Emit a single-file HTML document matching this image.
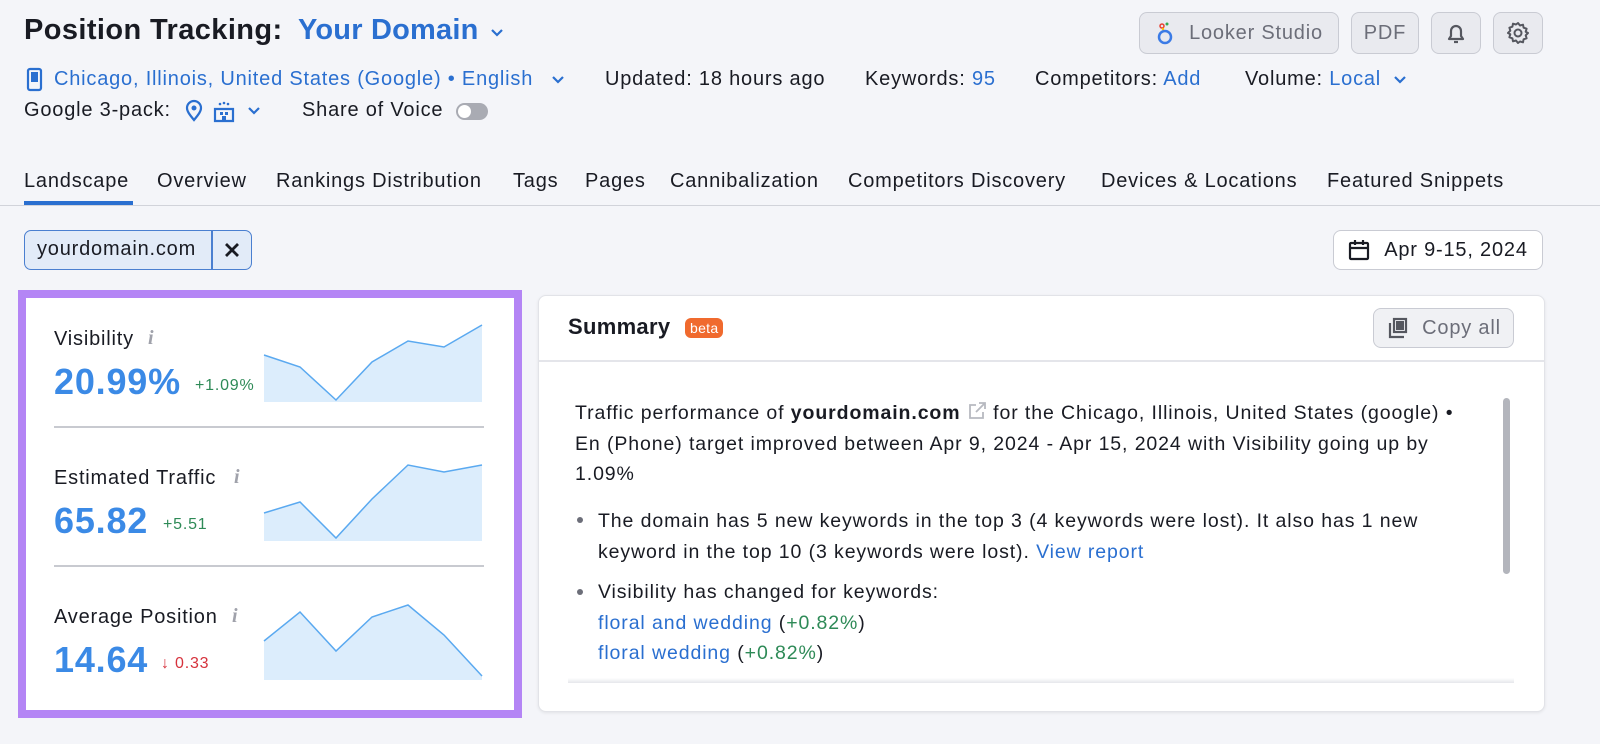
<!DOCTYPE html>
<html><head><meta charset="utf-8"><style>
*{box-sizing:border-box;margin:0;padding:0}
body{width:1600px;height:744px;background:#f4f5f9;font-family:"Liberation Sans",sans-serif;color:#191b23;position:relative;overflow:hidden;letter-spacing:.05em}
.a{position:absolute;white-space:nowrap}
.b{color:#2a6fd0}
.t20{font-size:20px}
.btn{position:absolute;border:1.5px solid #c9cbd3;background:#e9eaef;border-radius:8px;color:#6c6e79;font-size:20px;display:flex;align-items:center;justify-content:center}
.tab{position:absolute;top:170px;font-size:20px}
.lbl{font-size:20px;color:#191b23}
.val{font-size:36px;font-weight:bold;color:#3b8ae6}
.i{font-family:"Liberation Serif",serif;font-style:italic;color:#a0a2ab;font-size:20px;font-weight:bold}
.st{font-size:19.5px;color:#191b23;line-height:30.5px;letter-spacing:.9px}
</style></head><body>
<div class="a" style="left:24px;top:14px;font-size:29px;font-weight:bold;letter-spacing:.4px">Position Tracking:</div>
<div class="a b" style="left:298px;top:14px;font-size:29px;font-weight:bold;letter-spacing:.2px">Your Domain</div>
<svg class="a" style="left:489px;top:27px" width="16" height="12"><path d="M3 3l5 5 5-5" stroke="#2a6fd0" stroke-width="2.2" fill="none"/></svg>
<svg class="a" style="left:26px;top:67px" width="18" height="26"><rect x="2" y="2" width="13" height="21" rx="2" stroke="#2a6fd0" stroke-width="2.2" fill="none"/><rect x="5" y="5" width="7" height="10" fill="#2a6fd0"/></svg>
<div class="a t20 b" style="left:54px;top:68px">Chicago, Illinois, United States (Google) • English</div>
<svg class="a" style="left:550px;top:74px" width="16" height="12"><path d="M3 3l5 5 5-5" stroke="#2a6fd0" stroke-width="2.2" fill="none"/></svg>
<div class="a t20" style="left:605px;top:68px">Updated: 18 hours ago</div>
<div class="a t20" style="left:865px;top:68px">Keywords: <span class="b">95</span></div>
<div class="a t20" style="left:1035px;top:68px">Competitors: <span class="b">Add</span></div>
<div class="a t20" style="left:1245px;top:68px">Volume: <span class="b">Local</span></div>
<svg class="a" style="left:1392px;top:74px" width="16" height="12"><path d="M3 3l5 5 5-5" stroke="#2a6fd0" stroke-width="2.2" fill="none"/></svg>
<div class="a t20" style="left:24px;top:99px">Google 3-pack:</div>
<svg class="a" style="left:183px;top:99px" width="22" height="24"><path d="M11 21c-5-6-7-9-7-12a7 7 0 0114 0c0 3-2 6-7 12z" stroke="#2a6fd0" stroke-width="2.2" fill="none"/><circle cx="11" cy="9" r="2.5" fill="#2a6fd0"/></svg>
<svg class="a" style="left:212px;top:99px" width="24" height="24"><path d="M3 22V10h18v12z" stroke="#2a6fd0" stroke-width="2.2" fill="none"/><rect x="8" y="13" width="3" height="3" fill="#2a6fd0"/><rect x="13" y="13" width="3" height="3" fill="#2a6fd0"/><rect x="10" y="17" width="4" height="5" fill="#2a6fd0"/><circle cx="8" cy="5" r="1.3" fill="#2a6fd0"/><circle cx="12" cy="4" r="1.3" fill="#2a6fd0"/><circle cx="16" cy="5" r="1.3" fill="#2a6fd0"/></svg>
<svg class="a" style="left:246px;top:105px" width="16" height="12"><path d="M3 3l5 5 5-5" stroke="#2a6fd0" stroke-width="2.2" fill="none"/></svg>
<div class="a t20" style="left:302px;top:99px">Share of Voice</div>
<div class="a" style="left:456px;top:103px;width:32px;height:17px;border-radius:9px;background:#a9abb3"><div style="position:absolute;left:2px;top:2px;width:13px;height:13px;border-radius:50%;background:#fff"></div></div>

<div class="btn" style="left:1139px;top:12px;width:200px;height:42px"><svg width="20" height="26" style="margin-right:14px"><circle cx="10" cy="17" r="6" stroke="#3b7be6" stroke-width="2.5" fill="none"/><circle cx="7" cy="6" r="2" stroke="#e94235" stroke-width="1.5" fill="none"/><circle cx="12" cy="4" r="1.5" fill="#34a853"/><circle cx="8" cy="9" r="1.2" fill="#fbbc04"/></svg>Looker Studio</div>
<div class="btn" style="left:1351px;top:12px;width:68px;height:42px">PDF</div>
<div class="btn" style="left:1431px;top:12px;width:50px;height:42px"><svg width="22" height="24"><path d="M4 18h14l-2-3V10a5 5 0 00-10 0v5z" stroke="#55575f" stroke-width="2.2" fill="none" stroke-linejoin="round"/><path d="M9 21h4" stroke="#55575f" stroke-width="2.2"/></svg></div>
<div class="btn" style="left:1493px;top:12px;width:50px;height:42px"><svg width="24" height="24" viewBox="0 0 24 24"><path d="M12 2l2 2.5 3-.8.6 3 3 1-.9 3L22 12l-2.3 2.3.9 3-3 1-.6 3-3-.8L12 22l-2-2.5-3 .8-.6-3-3-1 .9-3L2 12l2.3-2.3-.9-3 3-1 .6-3 3 .8z" stroke="#55575f" stroke-width="2" fill="none" stroke-linejoin="round"/><circle cx="12" cy="12" r="3.5" stroke="#55575f" stroke-width="2" fill="none"/></svg></div>

<div class="tab" style="left:24px">Landscape</div>
<div class="a" style="left:24px;top:201px;width:109px;height:4px;background:#2a6fd0"></div>
<div class="tab" style="left:157px">Overview</div>
<div class="tab" style="left:276px">Rankings Distribution</div>
<div class="tab" style="left:513px">Tags</div>
<div class="tab" style="left:585px">Pages</div>
<div class="tab" style="left:670px">Cannibalization</div>
<div class="tab" style="left:848px">Competitors Discovery</div>
<div class="tab" style="left:1101px">Devices &amp; Locations</div>
<div class="tab" style="left:1327px">Featured Snippets</div>
<div class="a" style="left:0;top:205px;width:1600px;height:1px;background:#d1d3da"></div>

<div class="a" style="left:24px;top:230px;width:228px;height:40px;border:1.5px solid #4a7fd0;border-radius:7px;background:#e2ebf8"></div>
<div class="a" style="left:211px;top:230px;width:1.5px;height:40px;background:#4a7fd0"></div>
<div class="a t20" style="left:37px;top:238px">yourdomain.com</div>
<svg class="a" style="left:223px;top:241px" width="18" height="18"><path d="M3 3l12 12M15 3L3 15" stroke="#191b23" stroke-width="2.8"/></svg>
<div class="btn" style="left:1333px;top:230px;width:210px;height:40px;background:#fff;color:#191b23"><svg width="22" height="22" style="margin-right:14px"><rect x="2" y="4" width="18" height="16" rx="1" stroke="#191b23" stroke-width="2.2" fill="none"/><path d="M2 9h18M7 1v5M15 1v5" stroke="#191b23" stroke-width="2.2"/></svg>Apr 9-15, 2024</div>

<div class="a" style="left:18px;top:290px;width:504px;height:428px;border:8px solid #b485f5;background:#fff"></div>
<div class="a lbl" style="left:54px;top:328px">Visibility</div><div class="a i" style="left:148px;top:327px">i</div>
<div class="a val" style="left:54px;top:361px">20.99%</div><div class="a" style="left:195px;top:377px;font-size:16px;color:#2e8a57">+1.09%</div>
<div class="a" style="left:54px;top:426px;width:430px;height:2px;background:#c8cad0"></div>
<div class="a lbl" style="left:54px;top:467px">Estimated Traffic</div><div class="a i" style="left:234px;top:466px">i</div>
<div class="a val" style="left:54px;top:500px">65.82</div><div class="a" style="left:163px;top:516px;font-size:16px;color:#2e8a57">+5.51</div>
<div class="a" style="left:54px;top:565px;width:430px;height:2px;background:#c8cad0"></div>
<div class="a lbl" style="left:54px;top:606px">Average Position</div><div class="a i" style="left:232px;top:605px">i</div>
<div class="a val" style="left:54px;top:639px">14.64</div><div class="a" style="left:161px;top:655px;font-size:16px;color:#d6323c">↓ 0.33</div>
<svg class="a" style="left:0;top:0" width="600" height="744">
<path d="M264 355L300 367L336 400L372 362L408 341L444 347L482 325V402H264Z" fill="#dcedfc"/>
<path d="M264 355L300 367L336 400L372 362L408 341L444 347L482 325" stroke="#5aa9f0" stroke-width="1.5" fill="none"/>
<path d="M264 513L300 502L336 538L372 499L408 465L444 472L482 465V541H264Z" fill="#dcedfc"/>
<path d="M264 513L300 502L336 538L372 499L408 465L444 472L482 465" stroke="#5aa9f0" stroke-width="1.5" fill="none"/>
<path d="M264 641L300 612L336 651L372 617L408 605L444 635L482 676V680H264Z" fill="#dcedfc"/>
<path d="M264 641L300 612L336 651L372 617L408 605L444 635L482 676" stroke="#5aa9f0" stroke-width="1.5" fill="none"/>
</svg>

<div class="a" style="left:538px;top:295px;width:1007px;height:417px;background:#fff;border:1px solid #e2e3e8;border-radius:8px;box-shadow:0 1px 3px rgba(0,0,0,.08)"></div>
<div class="a" style="left:539px;top:360px;width:1005px;height:2px;background:#e4e5ea"></div>
<div class="a" style="left:568px;top:314px;font-size:22px;font-weight:bold;letter-spacing:.3px">Summary</div>
<div class="a" style="left:685px;top:318px;height:20px;padding:0 5px;border-radius:6px;background:#f06a2e;color:#fff;font-size:14px;line-height:20px;letter-spacing:.3px">beta</div>
<div class="btn" style="left:1373px;top:308px;width:141px;height:40px;border-color:#c9cbd3;background:#f0f1f4"><svg width="24" height="24" style="margin-right:12px"><path d="M4 7v14h14" stroke="#55575f" stroke-width="2.2" fill="none"/><rect x="8" y="3" width="12" height="13" stroke="#55575f" stroke-width="2.2" fill="none"/><rect x="10" y="5" width="8" height="9" fill="#55575f"/></svg>Copy all</div>
<div class="a st" style="left:575px;top:398px">Traffic performance of <b>yourdomain.com</b> <svg width="20" height="20" style="vertical-align:-2px"><path d="M9 4H3v13h13v-6M12 2h6v6M18 2L9 11" stroke="#b7b9c0" stroke-width="1.8" fill="none"/></svg> for the Chicago, Illinois, United States (google) •<br>En (Phone) target improved between Apr 9, 2024 - Apr 15, 2024 with Visibility going up by<br>1.09%</div>
<div class="a" style="left:577px;top:517px;width:6px;height:6px;border-radius:50%;background:#6c6e79"></div>
<div class="a st" style="left:598px;top:506px">The domain has 5 new keywords in the top 3 (4 keywords were lost). It also has 1 new<br>keyword in the top 10 (3 keywords were lost). <span class="b">View report</span></div>
<div class="a" style="left:577px;top:589px;width:6px;height:6px;border-radius:50%;background:#6c6e79"></div>
<div class="a st" style="left:598px;top:577px">Visibility has changed for keywords:<br><span class="b">floral and wedding</span> (<span style="color:#2e8a57">+0.82%</span>)<br><span class="b">floral wedding</span> (<span style="color:#2e8a57">+0.82%</span>)</div>
<div class="a" style="left:568px;top:678px;width:946px;height:5px;background:linear-gradient(#fff,#e6e7eb)"></div>
<div class="a" style="left:1503px;top:398px;width:7px;height:176px;border-radius:4px;background:#b3b5bc"></div>
</body></html>
